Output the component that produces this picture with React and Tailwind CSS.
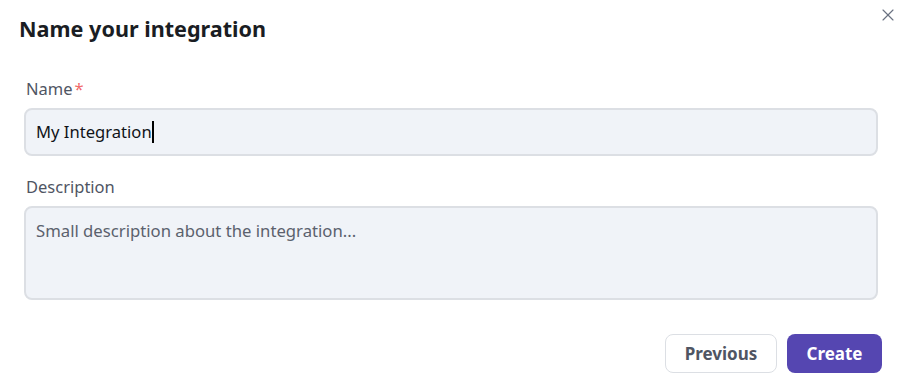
import React from 'react'
import { X } from 'lucide-react'

const App = () => {
  return (
    <div className="relative w-[900px] h-[379px] bg-white font-['Noto_Sans',sans-serif] overflow-hidden">
      <button className="absolute top-[5px] left-[878px] text-gray-500">
        <X size={20} strokeWidth={1.4} />
      </button>
      <h2 className="pl-[19px] pt-[15px] text-[21.6px] leading-[28px] font-bold text-[#1a1d23]">Name your integration</h2>

      <div className="pl-[24px] pr-[22px] pt-[34px] flex flex-col">
        <label className="pl-[2px] text-[16.5px] leading-[24px] text-[#4f5563]">
          Name<span className="text-[#f26b6b] ml-[2px]">*</span>
        </label>
        <div className="mt-[7px] h-[48px] rounded-[8px] border-2 border-[#dcdfe4] bg-[#f0f3f8] flex items-center px-[10px]">
          <span className="text-[16.6px] text-[#111318]">My Integration</span>
          <span className="w-[2px] h-[22px] bg-black"></span>
        </div>

        <label className="mt-[19px] pl-[2px] text-[16.5px] leading-[24px] text-[#4f5563]">Description</label>
        <div className="mt-[7px] h-[94px] rounded-[8px] border-2 border-[#dcdfe4] bg-[#f0f3f8] px-[10px] pt-[11px]">
          <span className="text-[16.7px] leading-[24px] text-[#5b616d]">Small description about the integration...</span>
        </div>

        <div className="mt-[34px] flex justify-end gap-[10px] -mr-[4px]">
          <button className="h-[39px] w-[112px] rounded-[8px] border border-[#dcdfe4] bg-white text-[17px] font-bold text-[#4f5563]">Previous</button>
          <button className="h-[39px] w-[95px] rounded-[8px] bg-[#5546b1] text-[17px] font-bold text-white">Create</button>
        </div>
      </div>
    </div>
  )
}

export default App
